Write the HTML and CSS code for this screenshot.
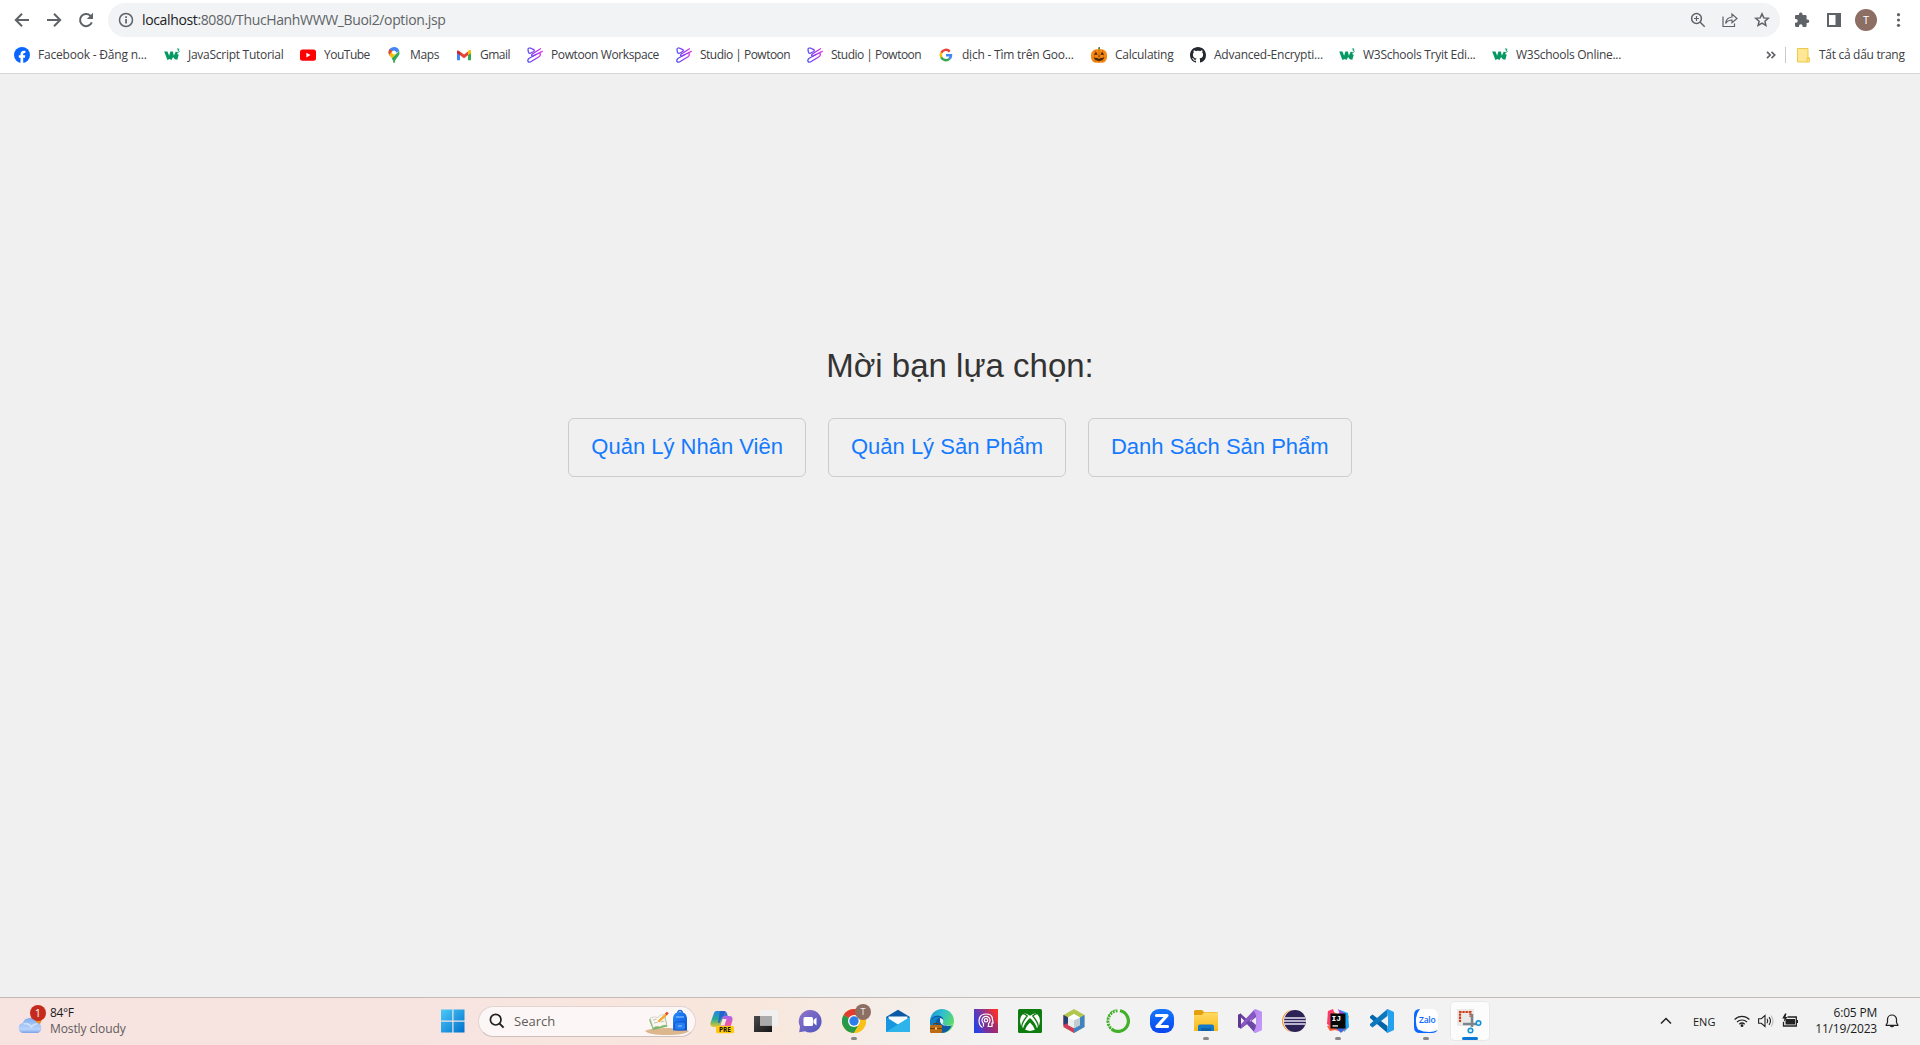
FILE: index.html
```html
<!DOCTYPE html>
<html lang="vi">
<head>
<meta charset="utf-8">
<title>Option</title>
<link rel="stylesheet" href="styles.css">
</head>
<body>
<svg class="defs" aria-hidden="true">
  <defs>
    <linearGradient id="gPow" gradientUnits="userSpaceOnUse" x1="0" y1="0" x2="16" y2="0"><stop offset="0" stop-color="#4b55f5"/><stop offset=".55" stop-color="#9a35ee"/><stop offset="1" stop-color="#f03be6"/></linearGradient>
    <linearGradient id="gWin" x1="0" y1="0" x2="1" y2="1"><stop offset="0" stop-color="#4bcbfa"/><stop offset="1" stop-color="#0070cc"/></linearGradient>
    <linearGradient id="gCloud" x1="0" y1="0" x2="0" y2="1"><stop offset="0" stop-color="#82aef0"/><stop offset=".75" stop-color="#b9d3fb"/><stop offset="1" stop-color="#7ba3ea"/></linearGradient>
    <linearGradient id="gCopA" x1="0" y1="0" x2="0" y2="1"><stop offset="0" stop-color="#2383e2"/><stop offset=".5" stop-color="#26a996"/><stop offset="1" stop-color="#e9c92d"/></linearGradient>
    <linearGradient id="gCopB" x1="0" y1="0" x2="0" y2="1"><stop offset="0" stop-color="#a965f2"/><stop offset=".5" stop-color="#e85aaa"/><stop offset="1" stop-color="#f68a5b"/></linearGradient>
    <linearGradient id="gDark" x1="0" y1="0" x2="1" y2="1"><stop offset="0" stop-color="#4a4a4a"/><stop offset="1" stop-color="#161616"/></linearGradient>
    <linearGradient id="gChat" x1="0" y1="0" x2="1" y2="1"><stop offset="0" stop-color="#9276c9"/><stop offset="1" stop-color="#4b53bc"/></linearGradient>
    <linearGradient id="gEdge" x1="0" y1="0" x2="1" y2=".5"><stop offset="0" stop-color="#1d8fd8"/><stop offset=".5" stop-color="#2fc0cf"/><stop offset="1" stop-color="#5bdc65"/></linearGradient>
    <linearGradient id="gHead" x1="0" y1=".7" x2="1" y2=".3"><stop offset="0" stop-color="#2440e8"/><stop offset=".5" stop-color="#8b3694"/><stop offset="1" stop-color="#fb3026"/></linearGradient>
    <linearGradient id="gFold" x1="0" y1="0" x2="0" y2="1"><stop offset="0" stop-color="#ffda65"/><stop offset="1" stop-color="#fab913"/></linearGradient>
    <linearGradient id="gZ" x1="0" y1="0" x2="0" y2="1"><stop offset="0" stop-color="#1477fa"/><stop offset="1" stop-color="#0a45ee"/></linearGradient>
    <linearGradient id="gVs" x1="0" y1="0" x2="1" y2="1"><stop offset="0" stop-color="#b488ea"/><stop offset="1" stop-color="#c79bff"/></linearGradient>
    <linearGradient id="gBag" x1="0" y1="0" x2="1" y2="1"><stop offset="0" stop-color="#248cff"/><stop offset="1" stop-color="#0a4fd8"/></linearGradient>
    <symbol id="w3" viewBox="0 0 16 16"><path d="M.2 4.500h3.300l1.600 4.300 1.300-4.300h2.500l1 4.300 1.700-4 1.500.2.700 2.800 1-.2-1.500 5.200-2.500-.6-1.700-2.300-1.600 3.100-1.900-1-2.200 1z" fill="#059862"/><path d="M12.900 2h2.200l-1 1.300q1.200.1 1.100 1.200-.2 1.200-2.300.9" fill="none" stroke="#059862" stroke-width=".9"/></symbol>
    <symbol id="pow" viewBox="0 0 16 16"><g fill="none" stroke="url(#gPow)" stroke-width="1.300" stroke-linecap="round" stroke-linejoin="round"><path d="M1.500 5.200Q.2 1 2.300.8 3.200.6 6.800 2.600 8 3.500 6.500 4.500L3.500 6.200Q2 6.600 1.500 5.200z"/><path d="M13.500 1.800 5.300 7Q3.600 9 5.800 9.200L15.300 4.300"/><path d="M8 8 2.200 11.200Q.3 12.700 1 14.500q1 1.200 2.800.2L12 9.800Q14 8.400 13 6.200"/></g></symbol>
    <symbol id="chrome" viewBox="0 0 24 24"><circle cx="12" cy="12" r="12" fill="#fbc116"/><path d="M12 12 1.600 6A12 12 0 0 1 22.400 6z" fill="#e33b2e"/><path d="M12 12 1.600 6A12 12 0 0 0 12 24l5.200-9z" fill="#269a48"/><path d="M12 6h10.400A12 12 0 0 1 12 24l5.200-9z" fill="#fbc116"/><circle cx="12" cy="12" r="6" fill="#fff"/><circle cx="12" cy="12" r="4.700" fill="#2f7de9"/></symbol>
  </defs>
</svg>

<header class="browser">
  <div class="toolbar">
    <svg class="nav" viewBox="0 0 16 16"><path d="M15 8H2.500M8 1.800 1.800 8 8 14.200" class="nl"/></svg>
    <svg class="nav" viewBox="0 0 16 16"><path d="M1 8h12.500M8 1.800 14.200 8 8 14.200" class="nl"/></svg>
    <svg class="nav" viewBox="0 0 16 16"><path d="M13.800 10.300A6.100 6.100 0 1 1 12.400 3.700L14 5.300" class="nl"/><path d="M15 .8v6.200H8.800z" fill="#5f6368"/></svg>
    <div class="omnibox">
      <svg class="info" viewBox="0 0 16 16"><circle cx="8" cy="8" r="6.500" fill="none" stroke="#5f6368" stroke-width="1.500"/><path d="M7.200 7h1.700v4.500H7.200zM7.200 4.300h1.700v1.600H7.200z" fill="#5f6368"/></svg>
      <span class="url"><b>localhost</b>:8080/ThucHanhWWW_Buoi2/option.jsp</span>
      <svg viewBox="0 0 16 16"><g fill="none" stroke="#5f6368" stroke-width="1.500"><circle cx="6.500" cy="6.500" r="4.900"/><path d="m10 10 4.700 4.700"/><path d="M6.500 4v5M4 6.500h5" stroke-width="1.200"/></g></svg>
      <svg viewBox="0 0 16 16"><g fill="none" stroke="#5f6368" stroke-width="1.200"><path d="M1 4.500v10h11.500v-3"/><path d="M3.700 11.500Q4.200 5.500 10 5V2l5 4.500-5 4.300V8Q6 8 3.700 11.500z"/></g></svg>
      <svg viewBox="0 0 16 16"><path d="m8 1.900 1.800 4 4.400.4-3.300 2.900 1 4.300L8 11.200l-3.900 2.300 1-4.300-3.300-2.900 4.400-.4z" fill="none" stroke="#5f6368" stroke-width="1.500"/></svg>
    </div>
    <div class="tools">
      <svg viewBox="0 0 16 16"><path d="M13.500 7.400h-.9V4.300q0-1.300-1.300-1.300H8.500V2a1.800 1.800 0 0 0-3.500 0v1H2.200Q1 3 1 4.300V7h.9a1.800 1.800 0 0 1 0 3.700H1v2.800Q1 15 2.300 15H5v-1a1.800 1.800 0 0 1 3.600 0v1h2.700q1.300 0 1.300-1.300V11h.9a1.800 1.800 0 0 0 0-3.600z" fill="#5f6368"/></svg>
      <svg viewBox="0 0 16 16"><path d="M1 1h14v14H1zM3 3v10h6.500V3z" fill="#5f6368" fill-rule="evenodd"/></svg>
      <span class="avatar">T</span>
      <svg class="dots" viewBox="0 0 16 16"><g fill="#5f6368"><circle cx="8.500" cy="2.700" r="1.600"/><circle cx="8.500" cy="8" r="1.600"/><circle cx="8.500" cy="13.300" r="1.600"/></g></svg>
    </div>
  </div>
  <nav class="bookmarks">
    <a class="bm fb"><svg viewBox="0 0 16 16"><circle cx="8" cy="8" r="8" fill="#0866ff"/><path d="M6.500 16v-5.200H4.800V8.300h1.700V7.200q0-3.500 3.400-3.500l1.500.1v2.100h-1Q9.200 5.900 9.200 7v1.300h2.100l-.4 2.500H9.200V16z" fill="#fff"/></svg><span>Facebook - Đăng n...</span></a>
    <a class="bm js"><svg><use href="#w3"/></svg><span>JavaScript Tutorial</span></a>
    <a class="bm yt"><svg viewBox="0 0 16 16"><rect y="2.500" width="16" height="11.300" rx="2.500" fill="#f00"/><path d="M6.400 5.800 10.500 8.100 6.400 10.500z" fill="#fff"/></svg><span>YouTube</span></a>
    <a class="bm maps"><svg viewBox="0 0 16 16"><path d="M8 0a5.500 5.500 0 0 1 5.300 4L4 8.500Q2.500 7 2.500 5.500A5.500 5.500 0 0 1 8 0z" fill="#4285f4"/><path d="m3.700 2 4 3.600-3.400 3.700Q2.500 7.500 2.500 5.500 2.500 3.400 3.700 2z" fill="#ea4335"/><path d="m3.200 7.800 3.100-3.700 3.400 3-3.600 4.500q-2-2-2.900-3.800z" fill="#fbbc04"/><path d="M13.200 3.800q1 2.900-1 5.500Q9.200 12.500 8.500 16H7.400q-.2-2.500-1.600-4.400z" fill="#34a853"/><circle cx="8" cy="5.600" r="2" fill="#fff"/></svg><span>Maps</span></a>
    <a class="bm gm"><svg viewBox="0 0 16 16"><path d="M1 4v9.200h3V7.500z" fill="#4285f4"/><path d="M12 7.500v5.700h3V4z" fill="#34a853"/><path d="M1 4v2l3 2.300V4.500z" fill="#c5221f"/><path d="M12 4.500v3.800L15 6V4q-.6-2-2.300-.9z" fill="#fbbc04"/><path d="M4 4.500v3.800l4 3 4-3V4.500l-4 3-5-3.800Q1.500 2.500 1 4z" fill="#ea4335"/></svg><span>Gmail</span></a>
    <a class="bm pw"><svg><use href="#pow"/></svg><span>Powtoon Workspace</span></a>
    <a class="bm st"><svg><use href="#pow"/></svg><span>Studio | Powtoon</span></a>
    <a class="bm st"><svg><use href="#pow"/></svg><span>Studio | Powtoon</span></a>
    <a class="bm gg"><svg viewBox="0 0 16 16"><g fill="none" stroke-width="2.500"><path d="M3.300 5.800A5 5 0 0 1 11.700 4.600" stroke="#ea4335"/><path d="M3.300 10.300a5 5 0 0 1 0-4.600" stroke="#fbbc04"/><path d="M11.300 11.800A5 5 0 0 1 3.300 10.200" stroke="#34a853"/><path d="M8 8.200h5q0 2.300-1.700 3.600" stroke="#4285f4"/></g></svg><span>dịch - Tìm trên Goo...</span></a>
    <a class="bm ca"><svg viewBox="0 0 16 16"><path d="M7.500 3 7 .5l2-.5.200 3z" fill="#3c8a35"/><rect y="2.300" width="16" height="13.500" rx="5.500" fill="#f58a13"/><path d="M8 2.500v13M4.500 3q-2 6 0 12M11.500 3q2 6 0 12" stroke="#d96a08" fill="none"/><path d="m3 7.800 2-3 1.700 3zM9.300 7.800l1.700-3 2 3zM7 9.500l1-1.500 1 1.500zM2.500 10.300l2.200.8 1.600-.4 1 1h1.400l1-1 1.600.4 2.200-.8Q12 14 8 14q-4 0-5.500-3.700z" fill="#4b2708"/></svg><span>Calculating</span></a>
    <a class="bm gh"><svg viewBox="0 0 16 16"><path d="M8 0C3.580 0 0 3.580 0 8c0 3.540 2.290 6.530 5.470 7.590.4.070.55-.17.55-.38 0-.19-.01-.82-.01-1.490-2.010.37-2.530-.49-2.690-.94-.09-.23-.48-.94-.82-1.130-.28-.15-.68-.52-.01-.53.63-.01 1.080.58 1.230.82.72 1.210 1.870.87 2.330.66.07-.52.28-.87.510-1.070-1.780-.2-3.640-.89-3.640-3.950 0-.87.310-1.590.82-2.150-.08-.2-.36-1.020.08-2.120 0 0 .67-.21 2.200.82.64-.18 1.320-.27 2-.27s1.360.09 2 .27c1.530-1.040 2.200-.82 2.200-.82.44 1.100.16 1.920.08 2.120.51.56.82 1.270.82 2.150 0 3.070-1.870 3.750-3.650 3.950.29.25.54.73.54 1.480 0 1.070-.01 1.930-.01 2.200 0 .21.15.46.55.38A8.010 8.010 0 0 0 16 8c0-4.420-3.580-8-8-8z" fill="#24292f"/></svg><span>Advanced-Encrypti...</span></a>
    <a class="bm wt"><svg><use href="#w3"/></svg><span>W3Schools Tryit Edi...</span></a>
    <a class="bm wo"><svg><use href="#w3"/></svg><span>W3Schools Online...</span></a>
    <div class="bm-end">
      <svg class="more" viewBox="0 0 10 8"><path d="M1 .8 4.200 4 1 7.200M5.500.8 8.700 4 5.500 7.200" fill="none" stroke="#5f6368" stroke-width="1.700"/></svg>
      <i class="sep"></i>
      <svg class="folder" viewBox="0 0 13 15"><path d="M.5.500h10.500v9.500h1.400v4H.5z" fill="#ffe793" stroke="#ecc94b"/><path d="M10 14v-4h2.400" fill="none" stroke="#ecc94b"/></svg>
      <span class="all">Tất cả dấu trang</span>
    </div>
  </nav>
</header>

<main>
  <h1>Mời bạn lựa chọn:</h1>
  <div class="choices">
    <a>Quản Lý Nhân Viên</a>
    <a>Quản Lý Sản Phẩm</a>
    <a>Danh Sách Sản Phẩm</a>
  </div>
</main>

<footer class="taskbar">
  <div class="weather">
    <svg viewBox="0 0 28 30"><circle cx="18" cy="15" r="5.500" fill="#f08a24"/><path d="M5.500 28a5 5 0 0 1-.8-9.900A7.500 7.500 0 0 1 18.600 17.500 5.500 5.500 0 0 1 20 28z" fill="url(#gCloud)"/><path d="M5.500 19q5-1.500 8 3 2-3.500 6-3" fill="none" stroke="#d9e7ff" stroke-width="1.500" opacity=".8"/><circle cx="20" cy="8" r="8" fill="#c42b1c"/><text x="20" y="12" class="badge">1</text></svg>
    <p><span class="deg">84°F</span><span class="sky">Mostly cloudy</span></p>
  </div>
  <div class="apps">
    <svg class="start" viewBox="0 0 24 24"><path d="M0 .5H11.300V11.500H0zM12.500.5H23.500V11.500H12.500zM0 12.700H11.300V23.500H0zM12.500 12.700H23.500V23.500H12.500z" fill="url(#gWin)"/></svg>
    <div class="search">
      <svg class="lens" viewBox="0 0 16 16"><circle cx="6.700" cy="6.700" r="5.300" fill="none" stroke="#222" stroke-width="1.700"/><path d="m10.600 10.600 4 4" stroke="#222" stroke-width="2"/></svg>
      <span>Search</span>
      <svg class="school" viewBox="0 0 44 26"><path d="M0 21q4-3 22-3t22 3q-4 4-22 4t-22-4z" fill="#dcb68c"/><path d="M4 9.500l16-4 2.500 11L8 20z" fill="#79b663"/><path d="M5 8q4-2 7.500-.5Q15 4.500 19 4.500l2.700 10.500q-4-.5-6.500 1.700-4-1-7 1z" fill="#fbf7ef" stroke="#b5c1b7" stroke-width=".6"/><path d="m8 10 3.500-.6M9 13l3.500-.7M15 9l3.500-1M16 12l3.500-1" stroke="#a4b0bb" stroke-width=".8"/><path d="m12.500 11 8.500-8 1.700 1.800-8.500 7.700z" fill="#f7a82f"/><path d="m20 3.500 2-1.800 1.700 1.800-2 1.800z" fill="#e5402e"/><path d="M32.500 4q0-3.500 2.500-3.500T37.500 4" fill="none" stroke="#1765d0" stroke-width="1.300"/><path d="M28 20.500V9q0-7 7-7t7 7v11.500z" fill="url(#gBag)"/><rect x="29.500" y="12" width="11" height="8" rx="2.500" fill="#267ff2" stroke="#084bc3" stroke-width=".7"/><path d="M31 7h8M33 16h4" stroke="#9dcaff" stroke-width="1"/></svg>
    </div>
    <span class="app"><svg viewBox="0 0 24 24"><path d="M6.500 2H15l-4 14q-.7 2-3 2H3Q-.7 17.500.8 13L4 4Q4.700 2 6.500 2z" fill="url(#gCopA)"/><path d="M13 7h6.500q4 0 2.800 5l-2.500 8q-.7 2.500-3 2.500H9z" fill="url(#gCopB)"/><path d="M10 2h4q3 0 3.700 5H14q-2 0-3 3L9.500 14H8z" fill="#225ccc" opacity=".85"/><path d="m12.500 10-2 6.500h4L16.500 10z" fill="#f8eadf"/><rect x="6" y="17" width="18" height="7.300" rx="1.500" fill="#ffc90e"/><text x="15" y="23.200" class="pre">PRE</text></svg></span>
    <span class="app"><svg viewBox="0 0 24 24"><path d="M0 7h18v16H0z" fill="url(#gDark)"/><path d="M6 1h18v15.500H6z" fill="#f0f0f0"/><path d="M6 7h12v9.500H6z" fill="#aaa"/></svg></span>
    <span class="app"><svg viewBox="0 0 24 24"><path d="M12 1a11.300 11.300 0 1 1-5 21.300L1.200 23.300 2 17.500A11.300 11.300 0 0 1 12 1z" fill="url(#gChat)"/><rect x="5.500" y="8" width="9.500" height="9" rx="1.500" fill="#fff"/><path d="m15.500 11 3-2.500V16.500l-3-2.500z" fill="#fff"/></svg></span>
    <span class="app run"><svg><use href="#chrome"/></svg><em class="profile">T</em></span>
    <span class="app"><svg viewBox="0 0 24 24"><path d="M0 8 12 .8 24 8v8H0z" fill="#0a5aa8"/><path d="M2.500 7.500h19V17h-19z" fill="#f7fbff"/><path d="M24 8v15H0z" fill="#35c2f1"/><path d="M0 8v15h24L0 8z" fill="#1697df"/><path d="M24 8 12 15.500 0 23h24z" fill="#2cb4eb"/></svg></span>
    <span class="app"><svg viewBox="0 0 24 24"><circle cx="12" cy="12" r="12" fill="url(#gEdge)"/><path d="M0 12Q2 6.500 8 6.500 13.500 7 13.500 12q-.5 1.500-1 2 1 3 7 2.700l2.300-.5Q18.500 24 11.500 24 0 23 0 12z" fill="#0c59a4"/><path d="M10 9q3.700.5 3.500 3.500-.5 1-1 1.500 1 3.500 9.300 2.200L18 17q5-1 5.800-3.700Q23 17 17.500 17 9 17 10 9z" fill="#e9f6f6"/><path d="M6.500 19Q3.500 10 10.500 8.500 5 6 0 12q0 9 11.500 12-3.700-1.700-5-5z" fill="#1282c7"/><rect y="16" width="12" height="8" rx="1" fill="#bb6b15"/><path d="M3.700 16v-1.500h4.600V16M0 19.500h12" fill="none" stroke="#6e3d0b"/><path d="M5 18.500h2v2H5z" fill="#ffd266"/></svg></span>
    <span class="app"><svg viewBox="0 0 24 24"><path d="M0 0h24v24H0z" fill="url(#gHead)"/><path d="m7 18 6 6h11V16l-5-6z" fill="#7c2080" opacity=".4"/><g fill="none" stroke="#fff" stroke-width="1.200"><path d="M8.500 18.500Q5 16.500 5 11.500 5.500 5 12 5t6.500 5.500l.7 3.500h-1.200v3.500h-4.500"/><path d="M9.500 17.500v-3a4 4 0 1 1 5 0v3"/><circle cx="12" cy="11.300" r="1.700"/></g></svg></span>
    <span class="app"><svg viewBox="0 0 24 24"><rect width="24" height="24" rx="1.500" fill="#0f7c10"/><circle cx="12" cy="12" r="10" fill="#fff"/><path d="M5 4Q8 3.800 12 6.800 16 3.800 19 4 16.500 1.800 12 1.800T5 4z" fill="#0f7c10"/><path d="M4.600 20.500Q6.500 13.500 12 9q5.500 4.500 7.400 11.500-1 1-2 1.300Q16 17 12 13.500 8 17 6.600 21.800z" fill="#0f7c10"/><path d="M4.500 4.500Q7 4.500 9.200 7 4 13 3.600 18" fill="none" stroke="#0f7c10" stroke-width="1.300"/><path d="M19.500 4.500Q17 4.500 14.800 7 20 13 20.400 18" fill="none" stroke="#0f7c10" stroke-width="1.300"/></svg></span>
    <span class="app"><svg viewBox="0 0 24 24"><path d="M12 0 22.500 6v12L12 24 1.500 18V6z" fill="#b3c74e"/><path d="M1.500 6 6 8.500v7.500L12 19v5L1.500 18z" fill="#cf3e5c"/><path d="M22.500 6v12L12 24v-5l6-3V8.500z" fill="#3f83c5"/><path d="M1.500 6v10l4.500-2V8.500z" fill="#263f73"/><path d="m12 5 6 3.500V16l-6 3.300L6 16V8.500z" fill="#e9f0ef"/><path d="m12 11 6-2.500V16l-6 3.300z" fill="#c2cdd0"/><path d="m12 5 6 3.500-6 2.700-6-2.700z" fill="#fff"/></svg></span>
    <span class="app"><svg viewBox="0 0 24 24"><g fill="none" stroke="#43b02a"><path d="M14 1.800A10.400 10.400 0 1 1 6 20.500" stroke-width="3.200"/><path d="M7 21A10.400 10.400 0 0 1 12 1.700" stroke-width="3" stroke-dasharray="1.800 1.200"/><path d="M5 20A11.300 11.300 0 0 1 9 1" stroke-width="1.200" stroke-dasharray="2.500 1"/></g></svg></span>
    <span class="app"><svg viewBox="0 0 24 24"><rect width="24" height="24" rx="9" fill="url(#gZ)"/><path d="M6.500 6.500h10.500L7 17.500h10.500" fill="none" stroke="#fff" stroke-width="3.200" stroke-linejoin="round" stroke-linecap="round"/></svg></span>
    <span class="app run"><svg viewBox="0 0 24 24"><path d="M0 2.500Q0 1 1.500 1H8l2 2h12.500Q24 3 24 4.500V10H0z" fill="#e2a00f"/><path d="M0 6h8l2-2.500h14V22H0z" fill="url(#gFold)"/><path d="M4 22v-4.500q0-2 2-2h12q2 0 2 2V22z" fill="#127bc9"/><path d="M7 19h10v3H7z" fill="#0d60a9"/></svg></span>
    <span class="app"><svg viewBox="0 0 24 24"><path d="M0 6 2.500 4.500 12 13l6-7v12L12 13 3 19.500 0 18z" fill="#6b3fa0"/><path d="M3 8.500v7L6.500 12z" fill="#f3f3f3"/><path d="M0 18 16 1l2 1v5L3 19.500z" fill="#8657c5"/><path d="M0 6v12l3 1.500V4.500z" fill="#5d3791"/><path d="M3 9v6l3-3z" fill="#f3f3f3"/><path d="m8 14 3-2.500 7 6.500-1 6z" fill="#6d46a8"/><path d="M13.500 12 18 8v8z" fill="#f3f3f3"/><path d="M17.500 0 24 2.800v18.400L17.500 24l-2-1.200 2.500-4.800V6L15.500 1z" fill="url(#gVs)"/></svg></span>
    <span class="app"><svg viewBox="0 0 24 24"><circle cx="11" cy="12" r="11" fill="#f7941e"/><circle cx="12" cy="12" r="10.900" fill="#f4f0ff"/><circle cx="13" cy="12" r="11" fill="#2c2255"/><path d="M2.200 9h21.300M2 12h22M2.200 15h21.300" stroke="#e7e3f3" stroke-width="1.500"/></svg></span>
    <span class="app run"><svg viewBox="0 0 24 24"><path d="m1 4 6-2 5 4 3-4 8 5-3 7z" fill="#ff8b1e"/><path d="M2 2 7 0l4 12-7 5-3-2z" fill="#fd3d67"/><path d="m14 1 8 3 1 14-5 5-3-9z" fill="#19a7f3"/><path d="m12 0 6 4-3 5z" fill="#b347e3"/><path d="m1 17 8-2 11 5-4 3-7-2-5 1z" fill="#ff5c38"/><path d="m9 18 12-1-6 7z" fill="#2d6ef1"/><path d="M4.500 4.500h15v15h-15z" fill="#080808"/><text x="5.500" y="12" class="ij">IJ</text><path d="M6.500 16.300h5.500v1.300H6.500z" fill="#fff"/></svg></span>
    <span class="app"><svg viewBox="0 0 24 24"><path d="M17.500 24v-7L2.500 5.500 0 7.500V9z" fill="#0065a9"/><path d="M0 15 17.500 0v7L2.500 18.500 0 16.500z" fill="#0e78bf"/><path d="M17.500 0 24 3v18l-6.500 3-1-1 1.500-6V7l-1.500-6z" fill="#26a1ee"/></svg></span>
    <span class="app run"><svg viewBox="0 0 24 24"><rect width="24" height="24" rx="6" fill="#fff"/><path d="M6 0Q0 0 0 6v12q0 6 6 6h12q4 0 5.500-3-3.500 2-8 2-6.500 0-11.500-2.500Q1.500 17 2 10 2.500 4 6 0z" fill="#0a68ff"/><text x="13.200" y="14" class="zalo">Zalo</text></svg></span>
    <span class="app active"><svg viewBox="0 0 24 24"><rect x="-1" y="0" width="17" height="17" rx="1" fill="#e9e9e9"/><path d="M2 13V3h10.500v5" fill="none" stroke="#cf3a11" stroke-width="2.200" stroke-dasharray="2.300 .8"/><path d="M14 5v13M5 15h14" stroke="#7c858c" stroke-width="2.500" fill="none"/><circle cx="20.500" cy="14" r="2.300" fill="#d8f1ff" stroke="#1391d5" stroke-width="1.500"/><circle cx="12.500" cy="21.500" r="2.300" fill="#d8f1ff" stroke="#1391d5" stroke-width="1.500"/></svg></span>
  </div>
  <div class="tray">
    <svg class="chev" viewBox="0 0 12 8"><path d="m1 6.500 5-5 5 5" fill="none" stroke="#222" stroke-width="1.500"/></svg>
    <span class="lang">ENG</span>
    <svg class="wifi" viewBox="0 0 16 14"><g fill="none" stroke="#222" stroke-width="1.200"><path d="M.6 5.500a10.500 10.500 0 0 1 14.800 0M3 8a7.200 7.200 0 0 1 10 0M5.300 10.300a3.900 3.900 0 0 1 5.400 0"/></g><circle cx="8" cy="11.700" r="1.400" fill="#222"/></svg>
    <svg class="vol" viewBox="0 0 16 14"><g fill="none" stroke="#222" stroke-width="1.100"><path d="M.6 4.700h2.700L7 1.500v11L3.300 9.300H.6z"/><path d="M9 4.800q1.500 2.200 0 4.400M11 3.200q3 3.800 0 7.600"/><path d="M13 1.500q4 5.500 0 11" stroke="#bbb"/></g></svg>
    <svg class="bat" viewBox="0 0 16 14"><path d="M5.500 3h8.800v9H1.500V8" fill="none" stroke="#222" stroke-width="1.300"/><path d="M3.500 5h9.500v5.500H3.500zM14.500 6H16v3h-1.500zM3-.5.2 4.500H2.500L1.500 8.500 5.500 3H3.500L4.500-.5z" fill="#222"/></svg>
    <p class="clock"><span>6:05 PM</span><span>11/19/2023</span></p>
    <svg class="bell" viewBox="0 0 14 16"><path d="M1 12.300h12L11.500 9.500V6.500a4.500 4.500 0 0 0-9 0v3zM5.300 12.500a1.800 1.800 0 0 0 3.400 0" fill="none" stroke="#222" stroke-width="1.200" stroke-linejoin="round"/></svg>
  </div>
</footer>
</body>
</html>
```
FILE: styles.css
```css
* { box-sizing: border-box; }
html { height: 100%; overflow: hidden; }
body {
  margin: 0;
  height: 1045px;
  display: flex;
  flex-direction: column;
  overflow: hidden;
  background: #f0f0f0;
  font-family: "Open Sans", "Noto Sans", sans-serif;
}
p, h1 { margin: 0; }
svg { flex: none; display: block; overflow: visible; }
.defs { position: absolute; width: 0; height: 0; }

/* browser chrome */
.browser { height: 74px; background: #fff; border-bottom: 1px solid #d5d7d9; flex: none; }
.toolbar { height: 40px; display: flex; align-items: center; padding-left: 14px; }
.nav { width: 16px; height: 16px; margin-right: 16px; }
.nl { fill: none; stroke: #5f6368; stroke-width: 2; }
.omnibox {
  width: 1672px;
  height: 34px;
  margin-left: -2px;
  padding: 0 10px;
  border-radius: 17px;
  background: #f1f3f4;
  display: flex;
  align-items: center;
  gap: 16px;
}
.omnibox svg { width: 16px; height: 16px; }
.url { flex: 1; margin-left: -8px; padding-bottom: 1px; font-size: 14px; letter-spacing: -0.36px; color: #5f6368; white-space: nowrap; }
.url b { font-weight: 400; color: #202124; }
.tools { display: flex; align-items: center; gap: 16px; margin-left: 14px; }
.tools svg { width: 16px; height: 16px; }
.avatar {
  width: 22px;
  height: 22px;
  margin: 0 -3px;
  border-radius: 50%;
  background: #8d6e63;
  color: #fff;
  font-size: 11px;
  line-height: 22px;
  text-align: center;
}
.bookmarks { height: 30px; display: flex; align-items: center; padding-left: 14px; }
.bm { display: flex; align-items: center; gap: 8px; font-size: 12px; letter-spacing: -0.35px; color: #3c4043; white-space: nowrap; flex: none; }
.bm svg { width: 16px; height: 16px; }
.bm span, .all { padding-bottom: 1px; }
.bm.fb { width: 150px; letter-spacing: -0.2px; }
.bm.js { width: 136px; letter-spacing: -0.27px; }
.bm.yt { width: 86px; letter-spacing: -0.5px; }
.bm.maps { width: 70px; }
.bm.gm { width: 71px; letter-spacing: -0.5px; }
.bm.pw { width: 149px; letter-spacing: -0.4px; }
.bm.st { width: 131px; letter-spacing: -0.52px; }
.bm.gg { width: 153px; letter-spacing: -0.22px; }
.bm.ca { width: 99px; letter-spacing: -0.25px; }
.bm.gh { width: 149px; letter-spacing: -0.23px; }
.bm.wt { width: 153px; letter-spacing: -0.27px; }
.bm.wo { width: 140px; letter-spacing: -0.27px; }
.bm-end { flex: 1; display: flex; align-items: center; justify-content: flex-end; padding-right: 16px; }
.more { width: 10px; height: 8px; margin-right: 9px; }
.sep { width: 1px; height: 16px; background: #c9cbce; margin-right: 11px; }
.folder { width: 13px; height: 15px; margin-right: 9px; }
.all { width: 85px; font-size: 12px; letter-spacing: -0.3px; color: #3c4043; white-space: nowrap; }

/* page */
main {
  flex: 1;
  display: flex;
  flex-direction: column;
  align-items: center;
  padding-top: 273px;
  font-family: "Liberation Sans", Arial, sans-serif;
}
h1 { font-size: 33px; font-weight: 400; line-height: 38px; color: #333; }
.choices { display: flex; gap: 22px; margin-top: 33px; }
.choices a {
  height: 59px;
  padding: 0 22px;
  border: 1px solid #ccc;
  border-radius: 6px;
  color: #147aff;
  font-size: 22px;
  line-height: 56px;
  white-space: nowrap;
}

/* taskbar */
.taskbar {
  height: 48px;
  flex: none;
  display: grid;
  grid-template-columns: 441px 1054px 1fr;
  align-items: start;
  border-top: 1px solid #c4bab8;
  background: linear-gradient(90deg, #f7e4e1 0, #f7e4e1 420px, #f8e7dc 760px, #f3f1ef 960px, #f2f2f2 1000px);
  color: #1b1b1b;
}
.weather { display: flex; align-items: center; gap: 4px; height: 46px; padding-left: 18px; }
.weather svg { width: 28px; height: 30px; margin-top: -3px; }
.weather p { display: flex; flex-direction: column; font-size: 12px; line-height: 16px; margin-top: -1px; }
.deg { letter-spacing: -0.4px; }
.sky { color: #605a59; letter-spacing: -0.1px; }
.badge { fill: #fff; font-size: 11px; text-anchor: middle; }
.apps { display: flex; align-items: center; height: 46px; }
.start { width: 24px; height: 24px; margin-right: 13px; }
.search {
  flex: none;
  width: 218px;
  height: 31px;
  margin-right: 7px;
  padding: 0 6px 0 10px;
  border: 1px solid #e2d4cf;
  border-bottom-color: #cdbfbb;
  border-radius: 16px;
  background: #fcf7f6;
  display: flex;
  align-items: center;
  font-size: 13px;
  color: #5e5b5a;
}
.lens { width: 16px; height: 16px; margin-right: 9px; }
.search span { flex: 1; padding-bottom: 1px; }
.school { width: 44px; height: 26px; margin-top: 3px; }
.app { position: relative; width: 38px; height: 38px; margin: 0 6px 0 0; display: flex; align-items: center; justify-content: center; flex: none; border-radius: 4px; }
.app svg { width: 24px; height: 24px; }
.active { background: #fcfcfc; box-shadow: 0 0 0 1px #e8e8e8; }
.run::after, .active::after {
  content: "";
  position: absolute;
  left: 16px;
  bottom: 0;
  width: 6px;
  height: 3px;
  border-radius: 2px;
  background: #888;
}
.active::after { left: 11px; width: 16px; background: #0a78d4; }
.profile {
  position: absolute;
  left: 20px;
  top: 2px;
  width: 16px;
  height: 16px;
  border-radius: 50%;
  background: #8d6e63;
  color: #eee;
  font: 9px/16px "Open Sans", sans-serif;
  text-align: center;
}
.pre { font-size: 6.5px; font-weight: 700; text-anchor: middle; fill: #111; }
.ij { font: 700 8px "Liberation Mono", monospace; fill: #fff; }
.zalo { font-size: 8.5px; font-weight: 600; letter-spacing: -0.3px; text-anchor: middle; fill: #0a68ff; }
.tray { display: flex; align-items: center; justify-content: flex-end; padding-right: 21px; height: 46px; }
.chev { width: 12px; height: 8px; margin-right: 21px; }
.lang { width: 23px; font-size: 11px; margin-right: 18px; }
.wifi, .vol, .bat { width: 16px; height: 14px; }
.wifi, .vol { margin-right: 8px; }
.clock { width: 79px; display: flex; flex-direction: column; text-align: right; font-size: 12px; line-height: 16px; letter-spacing: -0.2px; margin-top: -1px; }
.bell { width: 14px; height: 16px; margin-left: 8px; }
```
